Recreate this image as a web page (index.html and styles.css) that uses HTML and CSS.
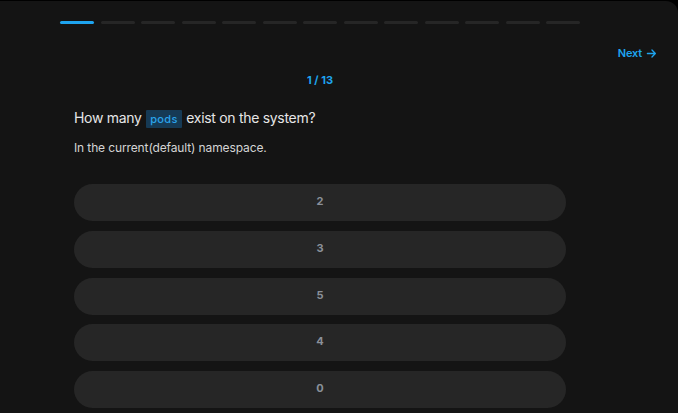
FILE: index.html
```html
<!DOCTYPE html>
<html>
<head>
<meta charset="utf-8">
<link rel="stylesheet" href="styles.css">
</head>
<body>
<div class="panel">
  <div class="progress">
    <span class="bar active"></span><span class="bar"></span><span class="bar"></span><span class="bar"></span><span class="bar"></span><span class="bar"></span><span class="bar"></span><span class="bar"></span><span class="bar"></span><span class="bar"></span><span class="bar"></span><span class="bar"></span><span class="bar"></span>
  </div>
  <div class="nav">
    <a class="next">Next
      <svg class="arrow" viewBox="0 0 12 12" width="11" height="11"><path d="M1.5 6h8.5M6.5 2.2L10.2 6 6.5 9.8" fill="none" stroke="currentColor" stroke-width="1.4" stroke-linecap="round" stroke-linejoin="round"/></svg>
    </a>
  </div>
  <div class="content">
    <div class="counter">1 / 13</div>
    <div class="question">How many <span class="code">pods</span> exist on the system?</div>
    <div class="sub">In the current(default) namespace.</div>
    <div class="options">
      <div class="option">2</div>
      <div class="option">3</div>
      <div class="option">5</div>
      <div class="option">4</div>
      <div class="option">0</div>
    </div>
  </div>
</div>
</body>
</html>
```
FILE: styles.css
```css
html, body {
  margin: 0;
  padding: 0;
  background: #000;
  font-family: Inter, "Noto Sans", sans-serif;
  overflow: hidden;
}
.panel {
  margin-top: 1px;
  background: #141414;
  border-top-right-radius: 12px;
  height: 412px;
  padding-top: 20px;
  box-sizing: border-box;
}
.progress {
  margin-left: 60px;
  width: 520px;
  display: flex;
  gap: 6.5px;
}
.bar {
  flex: 1;
  height: 3px;
  border-radius: 2px;
  background: #262626;
}
.bar.active {
  background: #1ea4ef;
}
.nav {
  display: flex;
  justify-content: flex-end;
  padding-right: 21px;
  margin-top: 22px;
}
.next {
  display: flex;
  align-items: center;
  gap: 4px;
  color: #1ea4ef;
  font-size: 11px;
  font-weight: 600;
  line-height: 14px;
  letter-spacing: -0.2px;
}
.arrow {
  display: block;
}
.content {
  margin: 0 112px 0 74px;
}
.counter {
  margin-top: 13px;
  text-align: center;
  color: #1ea4ef;
  font-size: 11px;
  font-weight: 700;
  line-height: 14px;
}
.question {
  margin-top: 21px;
  color: #e6e6e6;
  font-size: 14px;
  line-height: 20px;
  letter-spacing: -0.3px;
}
.code {
  display: inline-block;
  background: #163a55;
  color: #2aa3ea;
  font-size: 11px;
  font-weight: 500;
  line-height: 18px;
  padding: 0 4px;
  margin: 0 1px;
  border-radius: 1px;
  letter-spacing: 0.3px;
  vertical-align: 0px;
}
.sub {
  margin-top: 12px;
  color: #d4d4d4;
  font-size: 12px;
  line-height: 16px;
  letter-spacing: -0.12px;
}
.options {
  margin-top: 28px;
  display: flex;
  flex-direction: column;
  gap: 9.75px;
}
.option {
  height: 37px;
  box-sizing: border-box;
  padding-bottom: 3px;
  border-radius: 19px;
  background: #262626;
  color: #8a9099;
  font-size: 11px;
  font-weight: 700;
  display: flex;
  align-items: center;
  justify-content: center;
}
```
